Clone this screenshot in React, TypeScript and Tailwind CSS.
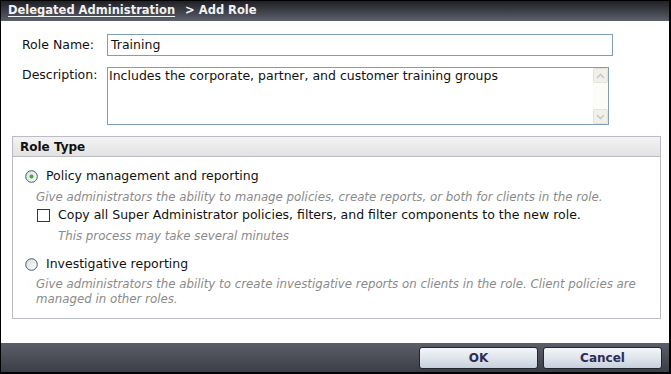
import React from 'react';

const font = { fontFamily: '"DejaVu Sans", Verdana, sans-serif' };

const Radio: React.FC<{ checked?: boolean }> = ({ checked }) => (
  <svg width="13" height="13" viewBox="0 0 13 13" className="shrink-0">
    <defs>
      <linearGradient id={checked ? 'rg1' : 'rg2'} x1="0" y1="0" x2="1" y2="1">
        <stop offset="0" stopColor="#dcdcd6" />
        <stop offset="1" stopColor="#ffffff" />
      </linearGradient>
    </defs>
    <circle cx="6.5" cy="6.5" r="5.8" fill={`url(#${checked ? 'rg1' : 'rg2'})`} stroke="#2f5f86" strokeWidth="1" />
    {checked && <circle cx="6.5" cy="6.5" r="2" fill="#3fae2a" />}
  </svg>
);

const Chevron: React.FC<{ up?: boolean }> = ({ up }) => (
  <svg width="9" height="6" viewBox="0 0 9 6">
    <path d={up ? 'M1 5 L4.5 1.5 L8 5' : 'M1 1 L4.5 4.5 L8 1'} fill="none" stroke="#c9c9bd" strokeWidth="1.6" />
  </svg>
);

const App: React.FC = () => {
  return (
    <div className="w-[671px] h-[374px] flex flex-col bg-white border-l border-r-2 border-b-2 border-black text-[12.5px] text-[#111]" style={font}>
      {/* Header */}
      <div className="h-[21px] shrink-0 flex items-center pl-[7px] bg-gradient-to-b from-[#1f2126] to-[#5e616b] border-t border-black text-[#f2f2f2] font-bold text-[11.5px]">
        <span className="underline underline-offset-2">Delegated Administration</span>
        <span className="ml-[10px]">&gt; Add Role</span>
      </div>

      {/* Form */}
      <div className="flex-1 flex flex-col">
        <div className="flex items-center mt-[13px] pl-[21px]">
          <span className="w-[85px]">Role Name:</span>
          <div className="w-[506px] h-[22px] border border-[#7f9db9] flex items-center px-[3px]">Training</div>
        </div>

        <div className="flex mt-[11px] pl-[21px] leading-[15px]">
          <span className="w-[85px]">Description:</span>
          <div className="w-[502px] h-[58px] border border-[#7f9db9] flex">
            <div className="flex-1 pl-[1px]">Includes the corporate, partner, and customer training groups</div>
            <div className="w-[15px] bg-[#fbfbf7] flex flex-col justify-between">
              <div className="h-[15px] border border-[#e3e3d9] rounded-[2px] bg-[#f1f1ea] flex items-center justify-center"><Chevron up /></div>
              <div className="h-[15px] border border-[#e3e3d9] rounded-[2px] bg-[#f1f1ea] flex items-center justify-center"><Chevron /></div>
            </div>
          </div>
        </div>

        {/* Role Type */}
        <div className="ml-[11px] mt-[11px] w-[649px] h-[183px] border border-[#b9bcc7]">
          <div className="h-[20px] bg-gradient-to-b from-[#f3f3f3] to-[#e2e2e2] border-b border-[#b9bcc7] flex items-center pl-[7px] font-bold text-[12px]">
            Role Type
          </div>
          <div className="pl-[12px] pt-[12px]">
            <div className="flex items-center gap-[8px] h-[15px]">
              <Radio checked />
              <span>Policy management and reporting</span>
            </div>
            <div className="pl-[11px] mt-[6px] italic text-[#8a8a8a] text-[11.8px] leading-[15px]">
              Give administrators the ability to manage policies, create reports, or both for clients in the role.
            </div>
            <div className="flex items-center gap-[8px] ml-[12px] mt-[3px] h-[15px]">
              <span className="w-[13px] h-[13px] border border-[#1c3e5c] bg-white shrink-0" />
              <span>Copy all Super Administrator policies, filters, and filter components to the new role.</span>
            </div>
            <div className="pl-[33px] mt-[6px] italic text-[#8a8a8a] text-[11.8px] leading-[15px]">
              This process may take several minutes
            </div>
            <div className="flex items-center gap-[8px] h-[15px] mt-[13px]">
              <Radio />
              <span>Investigative reporting</span>
            </div>
            <div className="pl-[11px] mt-[5px] italic text-[#8a8a8a] text-[11.8px] leading-[15px]">
              Give administrators the ability to create investigative reports on clients in the role. Client policies are managed in other roles.
            </div>
          </div>
        </div>
      </div>

      {/* Footer */}
      <div className="h-[29px] shrink-0 flex items-center justify-end gap-[5px] pr-[7px] bg-gradient-to-b from-[#5c5f69] to-[#3b3d47]">
        {['OK', 'Cancel'].map((label) => (
          <button
            key={label}
            className="w-[119px] h-[22px] rounded-[3px] border border-[#23252f] bg-gradient-to-b from-[#f4f6f9] via-[#dfe5ec] to-[#c6cfdb] text-[#2b2d55] font-bold text-[12px] leading-none"
          >
            {label}
          </button>
        ))}
      </div>
    </div>
  );
};

export default App;
